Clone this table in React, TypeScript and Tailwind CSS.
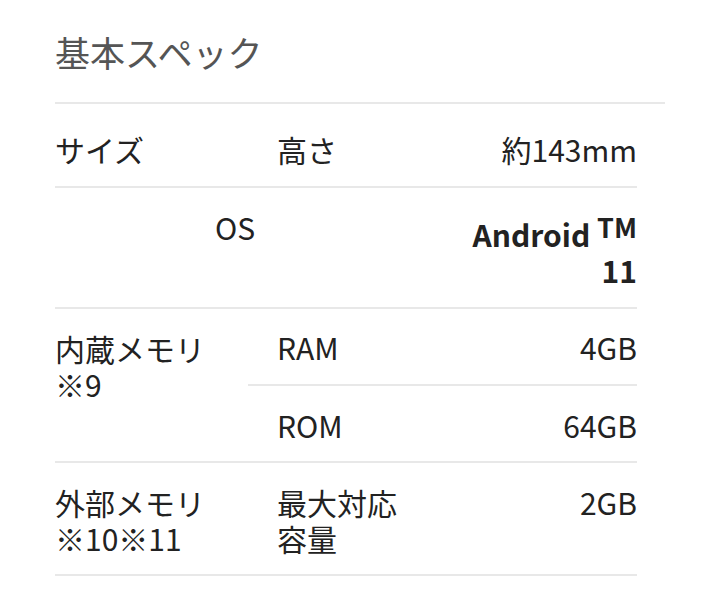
const font = { fontFamily: '"Noto Sans CJK JP", "Noto Sans", sans-serif' };

const line = "border-b-2 border-[#e8e8e8]";

export default function App() {
  return (
    <div className="min-h-[594px] bg-white pl-[55px] pr-[42px] pt-[27px]" style={font}>
      <h2 className={`${line} pb-[25px] text-[35px] font-normal leading-[50px] text-[#555]`}>
        基本スペック
      </h2>
      <table className="w-[582px] table-fixed border-separate border-spacing-0 text-[30px] leading-[36px] text-[#222]">
        <colgroup>
          <col className="w-[193px]" />
          <col className="w-[167px]" />
          <col className="w-[222px]" />
        </colgroup>
        <tbody>
          <tr>
            <th className={`${line} pb-[19px] pt-[27px] text-left align-top font-normal`}>サイズ</th>
            <td className={`${line} pb-[19px] pl-[29px] pt-[27px] align-top`}>高さ</td>
            <td className={`${line} pb-[19px] pt-[27px] text-right align-top`}>約143mm</td>
          </tr>
          <tr>
            <th colSpan={2} className={`${line} pt-[21px] text-center align-top font-normal`}>
              OS
            </th>
            <td className={`${line} pb-[19px] pt-[28px] text-right align-top font-bold`}>
              Android{" "}
              <sup className="top-[-9px] text-[27px] leading-none">TM</sup>
              <br />
              11
            </td>
          </tr>
          <tr>
            <th rowSpan={2} className={`${line} pt-[21px] text-left align-top font-normal`}>
              内蔵メモリ
              <br />
              ※9
            </th>
            <td className={`${line} pb-[19px] pl-[29px] pt-[20px] align-top`}>RAM</td>
            <td className={`${line} pb-[19px] pt-[20px] text-right align-top`}>4GB</td>
          </tr>
          <tr>
            <td className={`${line} pb-[18px] pl-[29px] pt-[21px] align-top`}>ROM</td>
            <td className={`${line} pb-[18px] pt-[21px] text-right align-top`}>64GB</td>
          </tr>
          <tr>
            <th className={`${line} pb-[18px] pt-[21px] text-left align-top font-normal`}>
              外部メモリ
              <br />
              ※10※11
            </th>
            <td className={`${line} pb-[18px] pl-[29px] pt-[21px] align-top`}>
              最大対応
              <br />
              容量
            </td>
            <td className={`${line} pb-[18px] pt-[21px] text-right align-top`}>2GB</td>
          </tr>
        </tbody>
      </table>
    </div>
  );
}
